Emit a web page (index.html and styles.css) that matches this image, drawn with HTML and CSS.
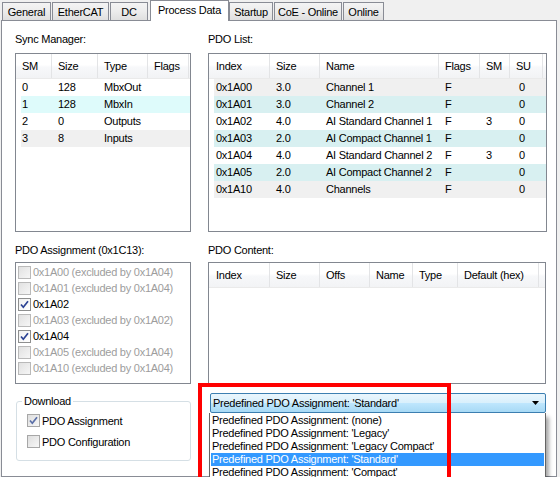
FILE: index.html
```html
<!DOCTYPE html>
<html>
<head>
<meta charset="utf-8">
<link rel="stylesheet" href="styles.css">
</head>
<body>
<div class="tabs">
  <div class="tab t-general">General</div>
  <div class="tab t-ethercat">EtherCAT</div>
  <div class="tab t-dc">DC</div>
  <div class="tab active t-process">Process Data</div>
  <div class="tab t-startup">Startup</div>
  <div class="tab t-coe">CoE - Online</div>
  <div class="tab t-online">Online</div>
</div>
<div class="panel">
  <div class="col col-left">
    <div class="label">Sync Manager:</div>
    <div class="listview lv-sm">
      <div class="lv-head">
        <div class="hc">SM</div><div class="hc">Size</div><div class="hc">Type</div><div class="hc">Flags</div>
      </div>
      <div class="lv-row"><div>0</div><div>128</div><div>MbxOut</div><div></div></div>
      <div class="lv-row cyan-sm"><div>1</div><div>128</div><div>MbxIn</div><div></div></div>
      <div class="lv-row"><div>2</div><div>0</div><div>Outputs</div><div></div></div>
      <div class="lv-row gray"><div>3</div><div>8</div><div>Inputs</div><div></div></div>
    </div>
    <div class="label label-second">PDO Assignment (0x1C13):</div>
    <div class="checklist">
      <div class="ci disabled"><span class="cb"></span>0x1A00 (excluded by 0x1A04)</div>
      <div class="ci disabled"><span class="cb"></span>0x1A01 (excluded by 0x1A04)</div>
      <div class="ci"><span class="cb checked"><svg width="11" height="11" viewBox="0 0 11 11"><path d="M2 5.5 L4.3 8.2 L9 2.2" fill="none" stroke="#2b4293" stroke-width="1.7"/></svg></span>0x1A02</div>
      <div class="ci disabled"><span class="cb"></span>0x1A03 (excluded by 0x1A02)</div>
      <div class="ci"><span class="cb checked"><svg width="11" height="11" viewBox="0 0 11 11"><path d="M2 5.5 L4.3 8.2 L9 2.2" fill="none" stroke="#2b4293" stroke-width="1.7"/></svg></span>0x1A04</div>
      <div class="ci disabled"><span class="cb"></span>0x1A05 (excluded by 0x1A04)</div>
      <div class="ci disabled"><span class="cb"></span>0x1A10 (excluded by 0x1A04)</div>
    </div>
    <fieldset class="group">
      <legend>Download</legend>
      <div class="gi"><span class="cb checked dim"><svg width="11" height="11" viewBox="0 0 11 11"><path d="M2 5.5 L4.3 8.2 L9 2.2" fill="none" stroke="#5a6fa8" stroke-width="1.7"/></svg></span>PDO Assignment</div>
      <div class="gi"><span class="cb dim"></span>PDO Configuration</div>
    </fieldset>
  </div>
  <div class="col col-right">
    <div class="label">PDO List:</div>
    <div class="listview lv-pdo">
      <div class="lv-head">
        <div class="hc">Index</div><div class="hc">Size</div><div class="hc">Name</div><div class="hc">Flags</div><div class="hc">SM</div><div class="hc">SU</div>
      </div>
      <div class="lv-row gray"><div>0x1A00</div><div>3.0</div><div>Channel 1</div><div>F</div><div></div><div class="su">0</div></div>
      <div class="lv-row cyan"><div>0x1A01</div><div>3.0</div><div>Channel 2</div><div>F</div><div></div><div class="su">0</div></div>
      <div class="lv-row"><div>0x1A02</div><div>4.0</div><div>AI Standard Channel 1</div><div>F</div><div>3</div><div class="su">0</div></div>
      <div class="lv-row cyan"><div>0x1A03</div><div>2.0</div><div>AI Compact Channel 1</div><div>F</div><div></div><div class="su">0</div></div>
      <div class="lv-row"><div>0x1A04</div><div>4.0</div><div>AI Standard Channel 2</div><div>F</div><div>3</div><div class="su">0</div></div>
      <div class="lv-row cyan"><div>0x1A05</div><div>2.0</div><div>AI Compact Channel 2</div><div>F</div><div></div><div class="su">0</div></div>
      <div class="lv-row gray"><div>0x1A10</div><div>4.0</div><div>Channels</div><div>F</div><div></div><div class="su">0</div></div>
    </div>
    <div class="label label-second">PDO Content:</div>
    <div class="listview lv-content">
      <div class="lv-head">
        <div class="hc">Index</div><div class="hc">Size</div><div class="hc">Offs</div><div class="hc">Name</div><div class="hc">Type</div><div class="hc">Default (hex)</div><div class="hc hc-last"></div>
      </div>
    </div>
    <div class="combo-wrap">
      <div class="combo">
        <span class="combo-text">Predefined PDO Assignment: 'Standard'</span>
        <svg class="combo-arrow" width="7" height="4" viewBox="0 0 7 4"><polygon points="0,0 7,0 3.5,4" fill="#000"/></svg>
      </div>
      <div class="dropdown">
        <div class="di">Predefined PDO Assignment: (none)</div>
        <div class="di">Predefined PDO Assignment: 'Legacy'</div>
        <div class="di">Predefined PDO Assignment: 'Legacy Compact'</div>
        <div class="di sel">Predefined PDO Assignment: 'Standard'</div>
        <div class="di">Predefined PDO Assignment: 'Compact'</div>
      </div>
    </div>
  </div>
</div>
<div class="annotation"></div>
</body>
</html>
```

FILE: styles.css
```css
* { box-sizing: border-box; }
html, body { margin: 0; padding: 0; }
body {
  width: 560px;
  height: 477px;
  overflow: hidden;
  position: relative;
  background: #f0f0f0;
  font-family: "Liberation Sans", Arial, sans-serif;
  font-size: 11px;
  letter-spacing: -0.25px;
  color: #000;
}

/* tabs */
.tabs {
  display: flex;
  align-items: flex-end;
  height: 20px;
  padding-left: 2px;
}
.tab {
  height: 18px;
  border: 1px solid #898c95;
  border-bottom: none;
  background: linear-gradient(#f4f4f4, #ececec 50%, #dfdfdf);
  display: flex;
  align-items: center;
  justify-content: center;
  line-height: 13px;
  margin-right: 1px;
  padding-top: 1px;
}
.tab.active {
  height: 21px;
  background: #fff;
  margin-bottom: -1px;
  margin-left: 1px;
  margin-right: 0;
  position: relative;
  z-index: 1;
  padding-top: 0;
  padding-bottom: 2px;
}
.t-general { width: 49px; }
.t-ethercat { width: 57px; }
.t-dc { width: 38px; }
.t-process { width: 79px; }
.t-startup { width: 44px; }
.t-coe { width: 68px; }
.t-online { width: 41px; }

/* panel */
.panel {
  margin-left: 1px;
  width: 556px;
  height: 457px;
  border: 1px solid #898c95;
  background: #fff;
  display: flex;
  gap: 17px;
  padding: 12px 9px 0 13px;
}
.col { display: flex; flex-direction: column; }
.col-left { width: 176px; }
.col-right { width: 339px; }

.label {
  height: 13px;
  line-height: 13px;
  margin-bottom: 7px;
  white-space: nowrap;
}
.label-second { margin-top: 12px; margin-bottom: 5px; }

/* list views */
.listview {
  border: 1px solid #828790;
  background: #fff;
  overflow: hidden;
}
.lv-sm, .lv-pdo { height: 179px; }
.lv-content { height: 122px; width: 338px; }

.lv-head {
  display: grid;
  height: 25px;
  border-bottom: 1px solid #eaeaea;
  background: linear-gradient(#ffffff, #ffffff 45%, #f7f8fa 55%, #f2f3f5);
}
.hc {
  border-right: 1px solid #e3e4e6;
  padding-left: 6px;
  line-height: 24px;
  white-space: nowrap;
  overflow: hidden;
}
.lv-row {
  display: grid;
  height: 17px;
  line-height: 17px;
  margin-left: 5px;
  white-space: nowrap;
}
.lv-row > div { padding-left: 6px; overflow: hidden; }
.lv-row > div:first-child { padding-left: 1px; }
.lv-row.gray { background: #f0f0f0; }
.lv-row.cyan { background: #d8f0f1; }
.lv-row.cyan-sm { background: #defbfb; }

.lv-sm .lv-head { grid-template-columns: 36px 46px 50px 41px; }
.lv-sm .lv-row { grid-template-columns: 31px 46px 50px 41px; }

.lv-pdo .lv-head { grid-template-columns: 61px 50px 119px 41px 30px 33px; }
.lv-pdo .lv-head .hc:first-child { padding-left: 7px; }
.lv-pdo .lv-row { grid-template-columns: 56px 50px 119px 41px 30px 33px; }
.lv-pdo .lv-row > div:first-child { padding-left: 2px; }
.lv-pdo .lv-row > div.su { padding-left: 9px; }

.lv-content .lv-head { grid-template-columns: 61px 50px 50px 43px 45px 81px 6px; width: 336px; }
.lv-content .lv-head .hc:first-child { padding-left: 7px; }
.lv-content .hc-last { border-right: none; }

/* checklist */
.checklist {
  height: 122px;
  border: 1px solid #828790;
  background: #fff;
  padding-top: 1px;
}
.ci {
  height: 16px;
  display: flex;
  align-items: center;
  padding-left: 2px;
  white-space: nowrap;
}
.ci.disabled { color: #9d9d9d; }
.cb {
  width: 13px;
  height: 13px;
  flex: none;
  border: 1px solid #8e8f8f;
  background: linear-gradient(135deg, #dcdcdc, #fbfbfb);
  margin-right: 2px;
  display: flex;
  align-items: center;
  justify-content: center;
}
.ci.disabled .cb {
  border-color: #b9b9b9;
  background: linear-gradient(135deg, #e1e1e1, #f6f6f6);
}
.cb.checked { background: linear-gradient(135deg, #f0f0f0, #ffffff); }
.cb.dim { border-color: #a7a7a7; background: linear-gradient(135deg, #dedede, #f7f7f7); }

/* group box */
.group {
  margin: 11px 0 0 1px;
  width: 175px;
  height: 66px;
  border: 1px solid #d5dfe5;
  border-radius: 3px;
  padding: 2px 0 0 10px;
}
.group legend {
  padding: 0 2px;
  margin-left: -5px;
  line-height: 13px;
}
.gi {
  height: 21px;
  display: flex;
  align-items: center;
  white-space: nowrap;
}

/* combo */
.combo-wrap {
  position: relative;
  margin: 9px 1px 0 2px;
}
.combo {
  height: 20px;
  border: 1px solid #3c7fb1;
  border-radius: 2px;
  background: linear-gradient(#eaf6fd, #d9f0fc 48%, #bee6fd 52%, #a7d9f5);
  display: flex;
  align-items: center;
  padding: 0 4px 0 2px;
  white-space: nowrap;
}
.combo-text { flex: 1; }
.combo-arrow { margin-right: 2px; }
.dropdown {
  position: absolute;
  top: 100%;
  left: -1px;
  width: 337px;
  height: 80px;
  background: #fff;
  border: 1px solid #646464;
  border-top: none;
  padding: 1px 1px 0 1px;
  box-shadow: 3px 4px 4px rgba(0, 0, 0, 0.35);
}
.di {
  height: 13px;
  line-height: 13px;
  padding-left: 1px;
  white-space: nowrap;
}
.di.sel { background: #3399ff; color: #fff; }

/* red annotation frame */
.annotation {
  position: absolute;
  left: 198px;
  top: 383px;
  width: 253px;
  height: 110px;
  border: 4px solid #ff0000;
  pointer-events: none;
}
```
